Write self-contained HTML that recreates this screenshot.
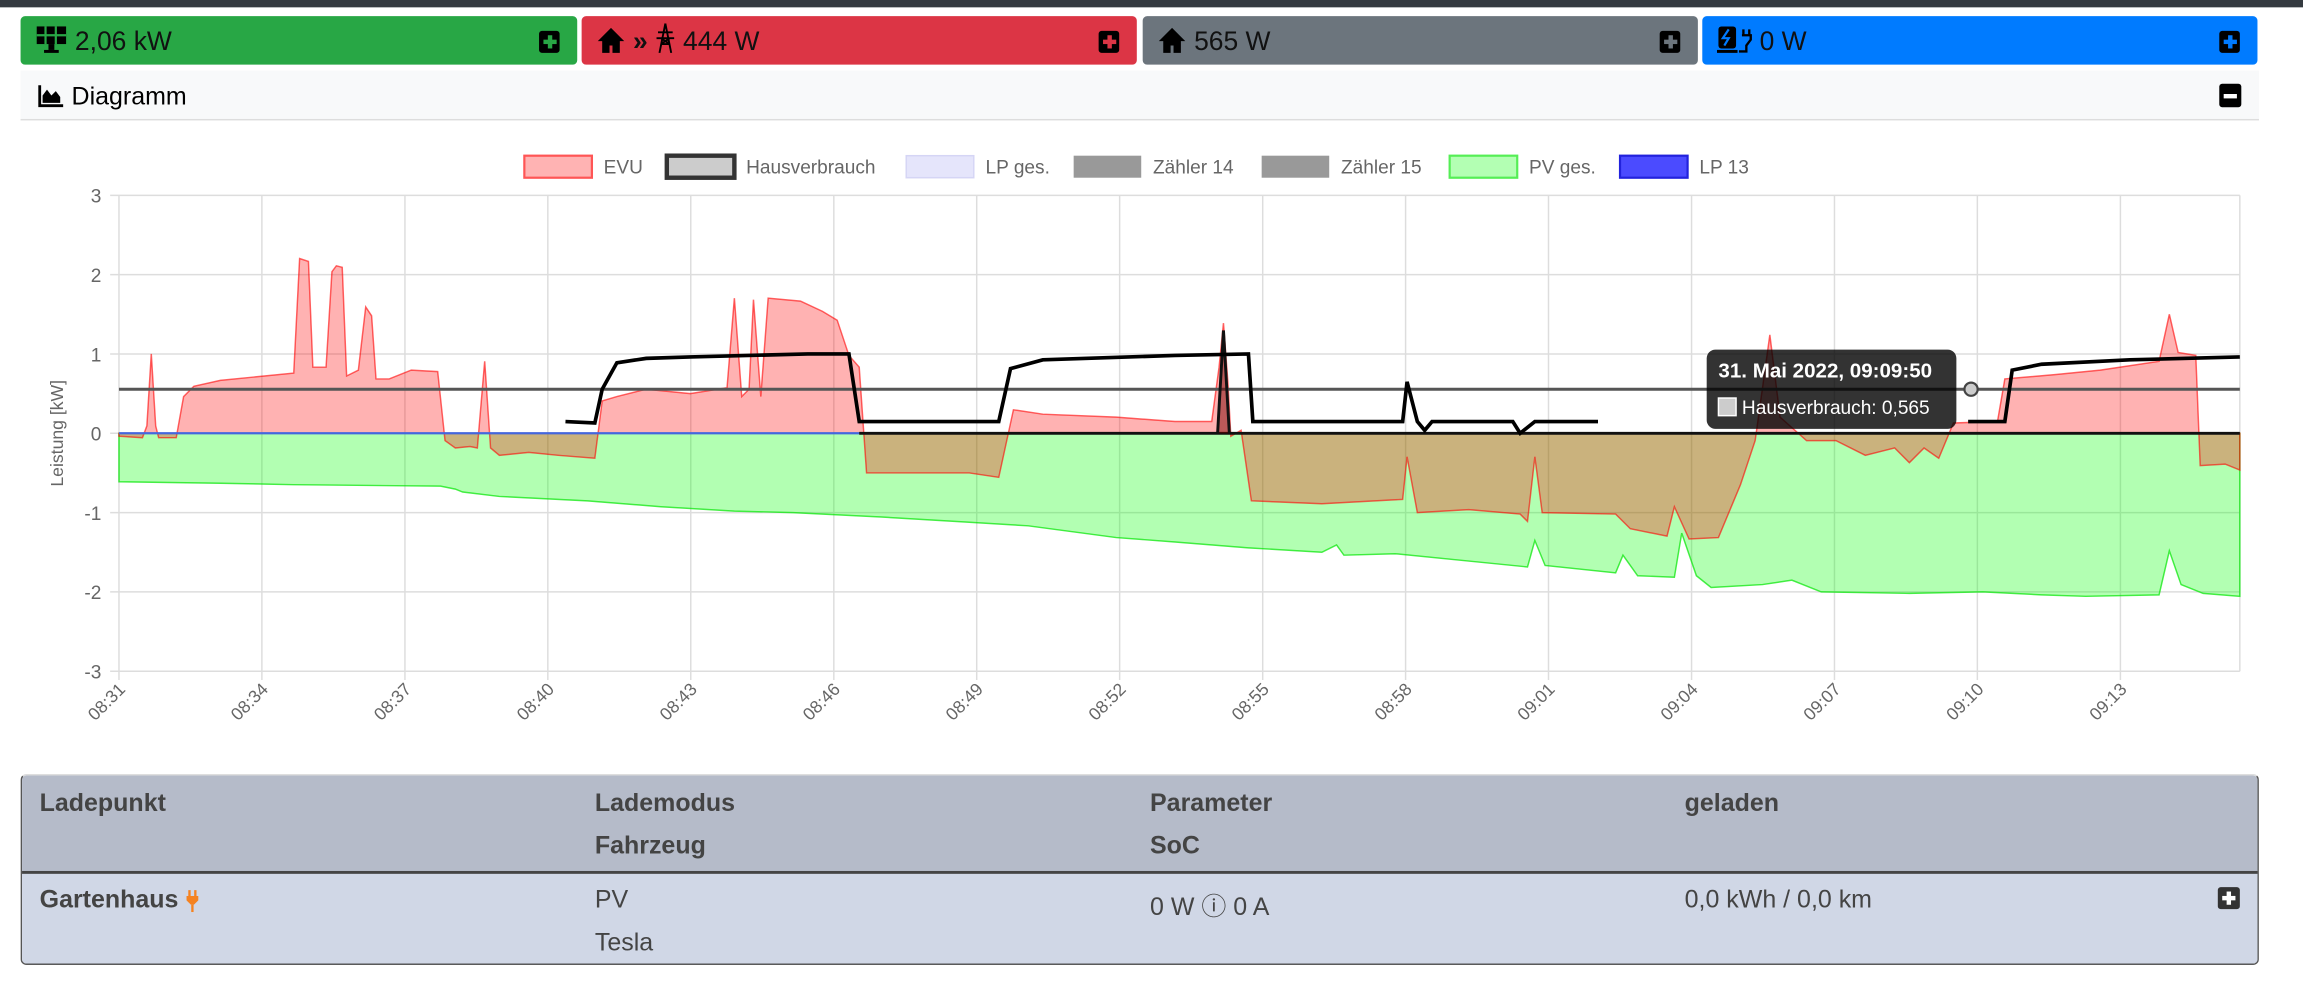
<!DOCTYPE html>
<html><head><meta charset="utf-8"><style>
html,body{margin:0;padding:0;background:#fff;overflow:hidden;width:2303px;height:1004px}
#w{position:absolute;left:0;top:0;width:1568px;height:684px;transform:scale(1.46875);transform-origin:0 0;font-family:"Liberation Sans",sans-serif}
.top{position:absolute;left:0;top:0;width:1568px;height:5px;background:#343a40}
.card{position:absolute;top:10px;height:35px;border-radius:4px;border:1px solid #fff;box-sizing:border-box;font-size:18px;color:#111;line-height:35px;padding-left:10px}
.card svg{vertical-align:-3px}
.pl{position:absolute;right:12px;top:10px;width:14px;height:15px;background:#000;border-radius:2px}
.pl:before{content:"";position:absolute;left:6px;top:3px;width:3px;height:9px;background:var(--c)}
.pl:after{content:"";position:absolute;left:3px;top:6px;width:9px;height:3px;background:var(--c)}
.hdr{position:absolute;left:14px;top:48px;width:1524px;height:34px;background:#f8f9fa;border-bottom:1px solid #ddd;font-size:17px;line-height:36px;padding-left:12px;box-sizing:border-box}
.tbl{position:absolute;left:14px;top:527px;width:1524px;height:130px;border:1px solid #555;border-top-color:#ddd;border-radius:4px;overflow:hidden;box-sizing:border-box;color:#444;font-size:17px}
.th{position:absolute;left:0;top:0;width:100%;height:65px;background:#b5bbc9;border-bottom:2px solid #444;font-weight:bold}
.tb{position:absolute;left:0;top:67px;width:100%;height:63px;background:#d0d7e6}
.t{position:absolute}
</style></head><body><div id="w">
<div class="top"></div>
<div class="card" style="left:13px;width:381px;background:#28a745"><svg width="22" height="20" viewBox="0 0 22 20"><rect x="1" y="1" width="20" height="12" fill="#000"/><path d="M7,1V13M14,1V13M1,7H21" stroke="#28a745" stroke-width="1.5"/><rect x="9" y="13" width="4" height="4" fill="#000"/><rect x="6" y="17" width="10" height="2" fill="#000"/></svg> 2,06 kW<div class="pl" style="--c:#28a745"></div></div>
<div class="card" style="left:395px;width:380px;background:#dc3545"><svg width="20" height="20" viewBox="0 0 20 20"><path d="M10,2L1,11H4V19H9V14H11V19H16V11H19Z" fill="#000"/></svg> <b>&raquo;</b> <svg width="14" height="22" viewBox="0 0 14 22"><path d="M7,1L3,21M7,1L11,21M2,7H12M1,11H13M4,15L10,11M10,15L4,11M4,15H10" stroke="#000" stroke-width="1.3" fill="none"/></svg> 444 W<div class="pl" style="--c:#dc3545"></div></div>
<div class="card" style="left:777px;width:380px;background:#6c757d"><svg width="20" height="20" viewBox="0 0 20 20"><path d="M10,2L1,11H4V19H9V14H11V19H16V11H19Z" fill="#000"/></svg> 565 W<div class="pl" style="--c:#6c757d"></div></div>
<div class="card" style="left:1158px;width:380px;background:#007bff"><svg width="24" height="20" viewBox="0 0 24 20"><rect x="1" y="1" width="12" height="15" rx="2" fill="#000"/><path d="M8,3L4,9H8L5,14" stroke="#007bff" stroke-width="1.5" fill="none"/><rect x="0" y="17" width="14" height="2" fill="#000"/><path d="M18,3V7M22,3V7M17,7H23V10Q20,14 20,14V18H15" stroke="#000" stroke-width="1.6" fill="none"/></svg> 0 W<div class="pl" style="--c:#007bff"></div></div>
<div class="hdr"><svg width="18" height="16" viewBox="0 0 18 16" style="vertical-align:-2px"><path d="M1,1V15H17" stroke="#000" stroke-width="2" fill="none"/><path d="M3,13V8L6,4L9,8L12,5L15,9V13Z" fill="#000"/></svg> Diagramm<div style="position:absolute;right:12px;top:9px;width:15px;height:16px;background:#000;border-radius:2px"><div style="position:absolute;left:3px;top:7px;width:9px;height:3px;background:#fff"></div></div></div>
<svg style="position:absolute;left:0;top:0" width="1568" height="684" viewBox="0 0 1568 684" font-family="Liberation Sans, sans-serif">
<g font-size="13" fill="#666">
<rect x="357" y="106" width="46" height="15" fill="#ffb3b3" stroke="#ff5555" stroke-width="1.5"/><text x="411" y="118">EVU</text>
<rect x="454" y="106" width="46" height="15" fill="#ccc" stroke="#333" stroke-width="3"/><text x="508" y="118">Hausverbrauch</text>
<rect x="617" y="106" width="46" height="15" fill="#e5e5fb" stroke="#d5d5f5"/><text x="671" y="118">LP ges.</text>
<rect x="731" y="106" width="46" height="15" fill="#999"/><text x="785" y="118">Zähler 14</text>
<rect x="859" y="106" width="46" height="15" fill="#999"/><text x="913" y="118">Zähler 15</text>
<rect x="987" y="106" width="46" height="15" fill="#b3ffb3" stroke="#55ee55" stroke-width="1.5"/><text x="1041" y="118">PV ges.</text>
<rect x="1103" y="106" width="46" height="15" fill="#4b4bff" stroke="#2222dd" stroke-width="1.5"/><text x="1157" y="118">LP 13</text>
</g>
<g stroke="#ddd" stroke-width="1">
<path d="M75,133H1525M75,187H1525M75,241H1525M75,295H1525M75,349H1525M75,403H1525M75,457H1525"/>
<path d="M81,133V463M178.3,133V463M275.7,133V463M373,133V463M470.3,133V463M567.7,133V463M665,133V463M762.3,133V463M859.7,133V463M957,133V463M1054.3,133V463M1151.7,133V463M1249,133V463M1346.3,133V463M1443.7,133V463M1525,133V457"/>
</g>
<g font-size="13" fill="#666" text-anchor="end">
<text x="69" y="138">3</text><text x="69" y="192">2</text><text x="69" y="246">1</text><text x="69" y="300">0</text><text x="69" y="354">-1</text><text x="69" y="408">-2</text><text x="69" y="462">-3</text>
</g>
<text transform="translate(43,295) rotate(-90)" font-size="12" fill="#666" text-anchor="middle">Leistung [kW]</text>
<path fill="rgba(0,255,0,0.3)" stroke="rgba(0,230,0,0.7)" stroke-width="1" d="M81,295 L81,328 L150,329 L200,330 L300,331 L310,333 L315,335 L340,338 L400,341 L450,345 L500,348 L540,349 L600,352 L650,355 L700,358 L760,366 L800,369 L850,373 L900,376 L910,371 L915,378 L950,377 L1000,382 L1040,386 L1045,368 L1052,385 L1100,390 L1105,378 L1115,392 L1140,393 L1145,363 L1155,392 L1165,400 L1200,398 L1220,395 L1240,403 L1300,404 L1350,403 L1390,405 L1420,406 L1470,405 L1477,375 L1485,398 L1500,404 L1525,406 L1525,295 Z"/>
<path fill="rgba(255,0,0,0.3)" stroke="rgba(255,0,0,0.6)" stroke-width="1" d="M81,295 L81,297 L97,298 L100,290 L103,241 L106,290 L108,298 L120,298 L125,270 L132,263 L150,259 L180,256 L200,254 L204,176 L210,178 L213,250 L222,250 L226,185 L229,181 L233,182 L236,256 L244,252 L249,209 L253,215 L256,258 L265,258 L280,252 L298,253 L303,300 L310,305 L320,304 L325,305 L330,246 L334,305 L340,310 L360,308 L380,310 L405,312 L410,273 L420,270 L440,265 L470,268 L495,264 L500,203 L505,270 L510,265 L513,204 L518,270 L523,203 L545,205 L560,212 L570,218 L578,242 L585,250 L590,322 L630,322 L660,322 L680,325 L690,279 L710,282 L760,284 L800,287 L825,287 L830,250 L833,220 L836,260 L838,297 L845,293 L852,341 L900,343 L955,340 L958,311 L965,349 L1000,347 L1035,350 L1040,355 L1045,311 L1050,349 L1100,350 L1110,360 L1135,365 L1140,345 L1150,367 L1170,366 L1185,330 L1195,300 L1205,228 L1212,284 L1230,300 L1250,300 L1270,310 L1290,305 L1300,315 L1310,305 L1320,312 L1330,288 L1360,287 L1365,258 L1400,255 L1430,252 L1470,246 L1477,214 L1483,240 L1495,242 L1498,317 L1515,316 L1525,320 L1525,295 Z"/>
<path d="M81,295H590" stroke="#4466dd" stroke-width="1.5"/>
<path d="M585,295H1525" stroke="#111" stroke-width="2"/>
<path d="M81,265H1525" stroke="#555" stroke-width="2"/>
<path d="M829,295L833,225L837,295" stroke="#111" stroke-width="2" fill="rgba(120,0,0,0.5)"/>
<path fill="none" stroke="#000" stroke-width="2.5" d="M385,287 L405,288 L410,265 L420,247 L440,244 L470,243 L550,241 L578,241 L585,287 L680,287 L688,251 L710,245 L800,242 L850,241 L853,287 L955,287 L958,260 L965,287 L970,293 L975,287 L1030,287 L1035,295 L1045,287 L1088,287 M1340,287 L1365,287 L1370,252 L1390,248 L1450,245 L1525,243"/>
<g font-size="12" fill="#666" text-anchor="end">
<text transform="translate(86,470) rotate(-45)">08:31</text>
<text transform="translate(183.3,470) rotate(-45)">08:34</text>
<text transform="translate(280.7,470) rotate(-45)">08:37</text>
<text transform="translate(378,470) rotate(-45)">08:40</text>
<text transform="translate(475.3,470) rotate(-45)">08:43</text>
<text transform="translate(572.7,470) rotate(-45)">08:46</text>
<text transform="translate(670,470) rotate(-45)">08:49</text>
<text transform="translate(767.3,470) rotate(-45)">08:52</text>
<text transform="translate(864.7,470) rotate(-45)">08:55</text>
<text transform="translate(962,470) rotate(-45)">08:58</text>
<text transform="translate(1059.3,470) rotate(-45)">09:01</text>
<text transform="translate(1156.7,470) rotate(-45)">09:04</text>
<text transform="translate(1254,470) rotate(-45)">09:07</text>
<text transform="translate(1351.3,470) rotate(-45)">09:10</text>
<text transform="translate(1448.7,470) rotate(-45)">09:13</text>
</g>
<rect x="1162" y="238" width="170" height="54" rx="6" fill="rgba(0,0,0,0.8)"/>
<text x="1170" y="257" font-size="14" font-weight="bold" fill="#fff">31. Mai 2022, 09:09:50</text>
<rect x="1170" y="271" width="12" height="12" fill="#ccc" stroke="#fff"/>
<text x="1186" y="282" font-size="13" fill="#fff">Hausverbrauch: 0,565</text>
<circle cx="1342" cy="265" r="4.5" fill="#ccc" stroke="#444" stroke-width="1.5"/>
</svg>
<div class="tbl">
<div class="th">
<div class="t" style="left:12px;top:9px">Ladepunkt</div>
<div class="t" style="left:390px;top:9px">Lademodus</div><div class="t" style="left:390px;top:38px">Fahrzeug</div>
<div class="t" style="left:768px;top:9px">Parameter</div><div class="t" style="left:768px;top:38px">SoC</div>
<div class="t" style="left:1132px;top:9px">geladen</div>
</div>
<div class="tb">
<div class="t" style="left:12px;top:8px;font-weight:bold">Gartenhaus <svg width="10" height="16" viewBox="0 0 10 16" style="vertical-align:-3px"><path d="M3,1V5M7,1V5" stroke="#f58220" stroke-width="1.6"/><path d="M1,5H9V8L6,11H4L1,8Z" fill="#f58220"/><path d="M5,11V16" stroke="#f58220" stroke-width="1.6"/></svg></div>
<div class="t" style="left:390px;top:8px">PV</div><div class="t" style="left:390px;top:37px">Tesla</div>
<div class="t" style="left:768px;top:8px">0 W &#9432; 0 A</div>
<div class="t" style="left:1132px;top:8px">0,0 kWh / 0,0 km</div>
<div style="position:absolute;right:12px;top:9px;width:15px;height:15px;background:#333;border-radius:2px"><div style="position:absolute;left:6px;top:3px;width:3px;height:9px;background:#fff"></div><div style="position:absolute;left:3px;top:6px;width:9px;height:3px;background:#fff"></div></div>
</div>
</div>
</div></body></html>
